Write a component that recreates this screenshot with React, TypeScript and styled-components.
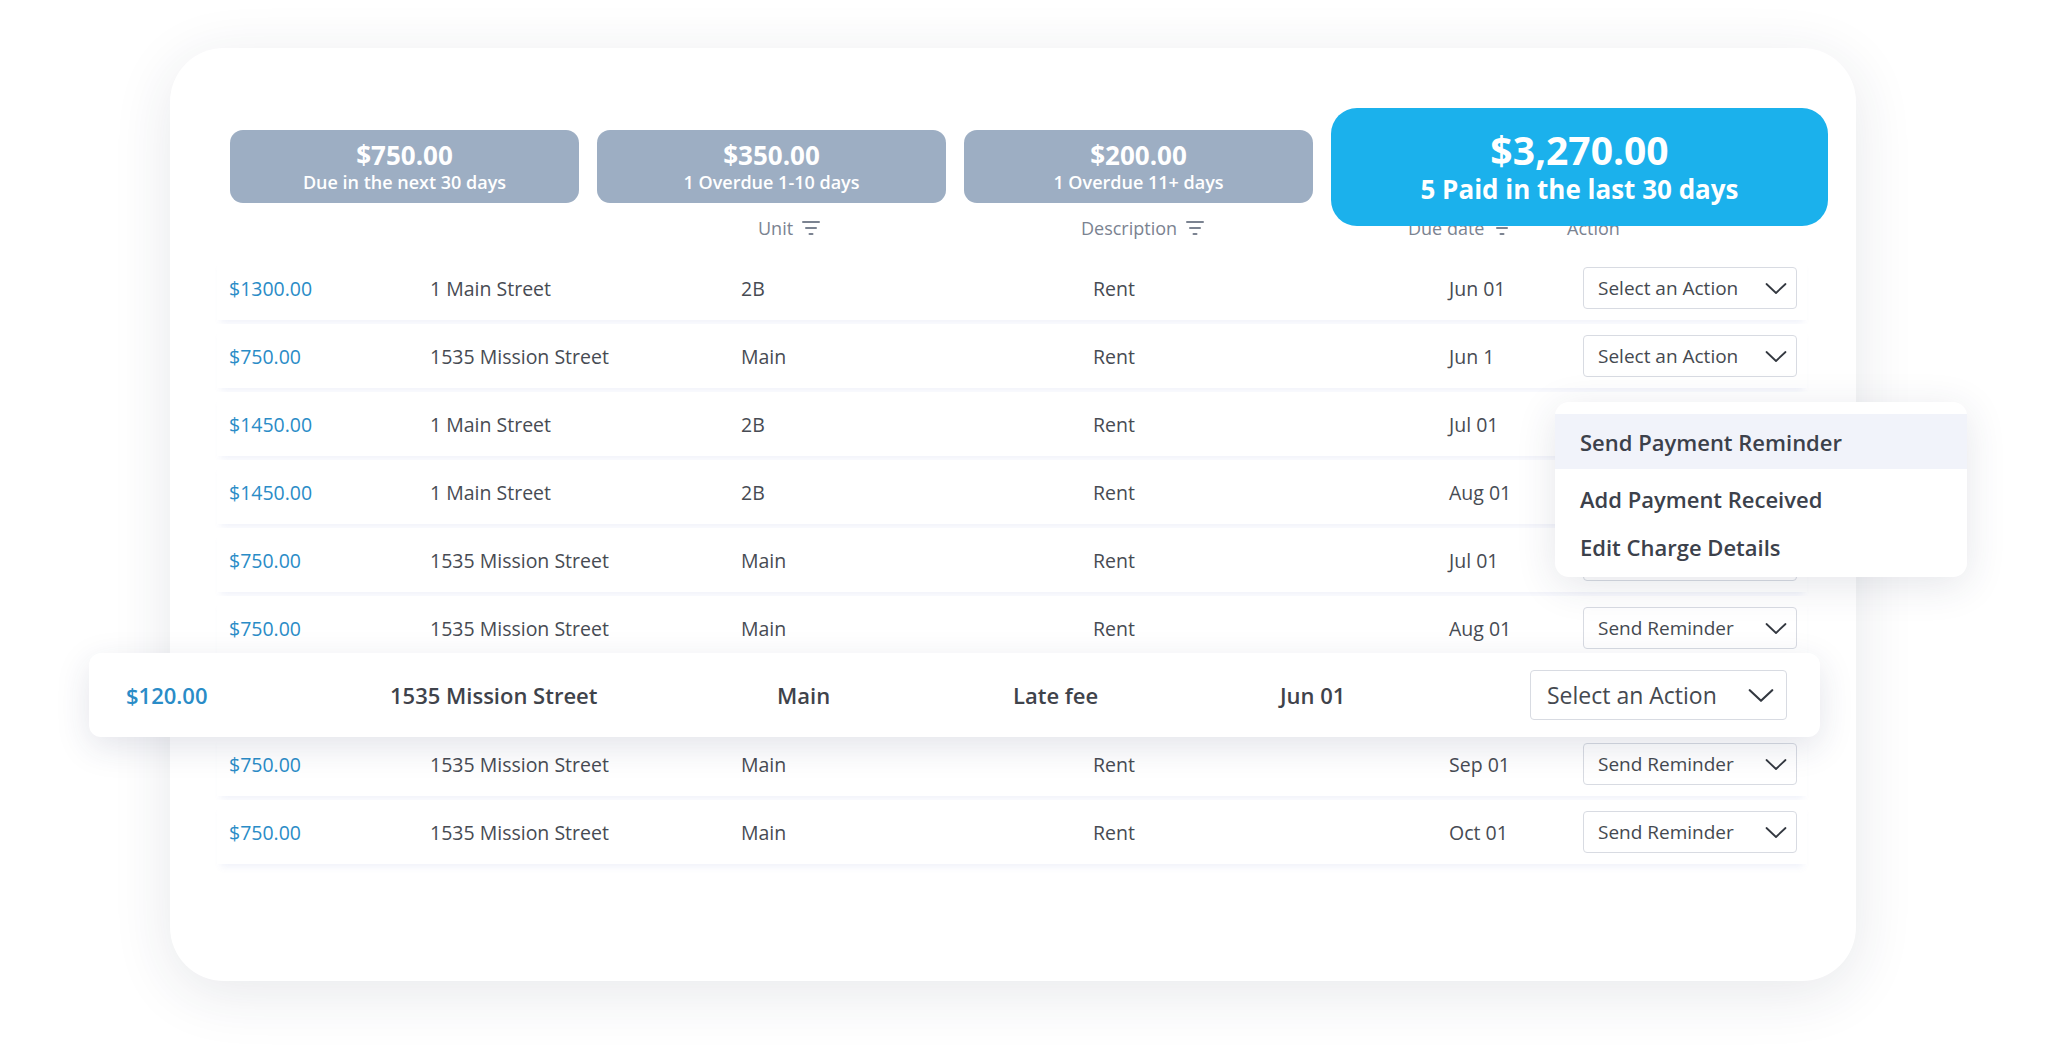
import styled, { createGlobalStyle } from 'styled-components';

interface Charge {
  amount: string;
  address: string;
  unit: string;
  description: string;
  due: string;
  action: string;
}

const charges: Charge[] = [
  { amount: '$1300.00', address: '1 Main Street', unit: '2B', description: 'Rent', due: 'Jun 01', action: 'Select an Action' },
  { amount: '$750.00', address: '1535 Mission Street', unit: 'Main', description: 'Rent', due: 'Jun 1', action: 'Select an Action' },
  { amount: '$1450.00', address: '1 Main Street', unit: '2B', description: 'Rent', due: 'Jul 01', action: 'Select an Action' },
  { amount: '$1450.00', address: '1 Main Street', unit: '2B', description: 'Rent', due: 'Aug 01', action: 'Send Reminder' },
  { amount: '$750.00', address: '1535 Mission Street', unit: 'Main', description: 'Rent', due: 'Jul 01', action: 'Send Reminder' },
  { amount: '$750.00', address: '1535 Mission Street', unit: 'Main', description: 'Rent', due: 'Aug 01', action: 'Send Reminder' },
];

const lateFee: Charge = {
  amount: '$120.00',
  address: '1535 Mission Street',
  unit: 'Main',
  description: 'Late fee',
  due: 'Jun 01',
  action: 'Select an Action',
};

const laterCharges: Charge[] = [
  { amount: '$750.00', address: '1535 Mission Street', unit: 'Main', description: 'Rent', due: 'Sep 01', action: 'Send Reminder' },
  { amount: '$750.00', address: '1535 Mission Street', unit: 'Main', description: 'Rent', due: 'Oct 01', action: 'Send Reminder' },
];

const menuItems = ['Send Payment Reminder', 'Add Payment Received', 'Edit Charge Details'];

const GlobalStyle = createGlobalStyle`
  html, body {
    margin: 0;
    padding: 0;
    background: #ffffff;
    font-family: "Open Sans", "Noto Sans", sans-serif;
    overflow: hidden;
  }
  * { box-sizing: border-box; }
`;

const Page = styled.div`
  width: 2048px;
  height: 1062px;
  padding: 48px 0 0 170px;
`;

const Card = styled.div`
  width: 1686px;
  height: 933px;
  background: #ffffff;
  border-radius: 54px;
  box-shadow: 0 12px 60px rgba(40, 50, 75, 0.11);
  padding: 82px 49px 0 47px;
  display: flex;
  flex-direction: column;
`;

const StatsRow = styled.div`
  display: flex;
  align-items: center;
  gap: 18px;
  margin-left: 13px;
  height: 73px;
`;

const StatCard = styled.div<{ $featured?: boolean }>`
  position: relative;
  z-index: 2;
  flex-shrink: 0;
  width: ${p => (p.$featured ? '497px' : '349px')};
  height: ${p => (p.$featured ? '118px' : '73px')};
  margin: ${p => (p.$featured ? '-22px 0' : '0')};
  border-radius: ${p => (p.$featured ? '26px' : '13px')};
  background: ${p => (p.$featured ? '#1bb1ec' : '#9daec3')};
  color: #ffffff;
  display: flex;
  flex-direction: column;
  align-items: center;
  justify-content: center;
  text-align: center;
`;

const StatAmount = styled.div<{ $featured?: boolean }>`
  font-size: ${p => (p.$featured ? '39px' : '26px')};
  line-height: ${p => (p.$featured ? '46px' : '31px')};
  font-weight: 700;
`;

const StatLabel = styled.div<{ $featured?: boolean }>`
  font-size: ${p => (p.$featured ? '26px' : '18px')};
  line-height: ${p => (p.$featured ? '33px' : '23px')};
  font-weight: ${p => (p.$featured ? 700 : 600)};
`;

const HeaderRow = styled.div`
  display: grid;
  grid-template-columns: 541px 323px 327px 159px 1fr;
  height: 40px;
  margin-top: 5px;
  align-items: center;
  color: #7b8391;
  font-size: 18px;
`;

const HeaderCell = styled.div`
  display: flex;
  align-items: center;
  gap: 9px;
`;

const Rows = styled.div`
  display: flex;
  flex-direction: column;
  gap: 4px;
  margin-top: 8px;
`;

const Row = styled.div`
  display: grid;
  grid-template-columns: 201px 311px 352px 356px 134px 214px;
  align-items: center;
  height: 64px;
  padding: 0 10px 0 12px;
  background: #ffffff;
  box-shadow: 0 7px 7px -4px rgba(90, 110, 200, 0.09);
  color: #474b53;
  font-size: 19.5px;
`;

const FeaturedRow = styled.div`
  position: relative;
  z-index: 1;
  display: grid;
  grid-template-columns: 264px 387px 236px 267px 250px 257px;
  align-items: center;
  height: 84px;
  margin: -11px -13px -9px -128px;
  padding: 0 33px 0 37px;
  background: #ffffff;
  border-radius: 12px;
  box-shadow: 0 10px 34px rgba(40, 50, 90, 0.13);
  color: #3f434b;
  font-size: 22px;
  font-weight: 600;
`;

const Amount = styled.div`
  color: #2a8cc7;
`;

const Cell = styled.div`
  white-space: nowrap;
`;

const ActionCell = styled.div`
  position: relative;
`;

const Select = styled.div<{ $large?: boolean }>`
  display: flex;
  align-items: center;
  justify-content: space-between;
  height: ${p => (p.$large ? '50px' : '42px')};
  padding: ${p => (p.$large ? '0 12px 0 16px' : '0 9px 0 14px')};
  border: 1px solid #d8dbe2;
  border-radius: 4px;
  background: #ffffff;
  color: #454950;
  font-size: ${p => (p.$large ? '23px' : '19px')};
  font-weight: 400;
`;

const Menu = styled.div`
  position: absolute;
  z-index: 5;
  top: -1px;
  left: -28px;
  width: 412px;
  padding: 12px 0 6px;
  background: #ffffff;
  border-radius: 14px;
  box-shadow: 0 8px 40px rgba(40, 50, 80, 0.12);
`;

const MenuItem = styled.div<{ $active?: boolean }>`
  display: flex;
  align-items: center;
  height: ${p => (p.$active ? '55px' : '48px')};
  margin-bottom: ${p => (p.$active ? '6px' : '0')};
  padding-left: 25px;
  background: ${p => (p.$active ? '#f1f3fa' : 'transparent')};
  color: #3c414b;
  font-size: 22px;
  font-weight: 600;
`;

const FilterIcon = () => (
  <svg width="18" height="16" viewBox="0 0 18 16" fill="none" stroke="#7b8391" strokeWidth="2" strokeLinecap="round">
    <line x1="1" y1="2" x2="17" y2="2" />
    <line x1="4" y1="8" x2="14" y2="8" />
    <line x1="7.5" y1="14" x2="10.5" y2="14" />
  </svg>
);

const Chevron = ({ size = 22 }: { size?: number }) => (
  <svg width={size} height={size / 2} viewBox="0 0 22 11" fill="none" stroke="#333840" strokeWidth="1.8" strokeLinecap="round" strokeLinejoin="round">
    <polyline points="1.5,1 11,10 20.5,1" />
  </svg>
);

const ChargeRow = ({ charge, menu }: { charge: Charge; menu?: boolean }) => (
  <Row>
    <Amount>{charge.amount}</Amount>
    <Cell>{charge.address}</Cell>
    <Cell>{charge.unit}</Cell>
    <Cell>{charge.description}</Cell>
    <Cell>{charge.due}</Cell>
    <ActionCell>
      <Select>
        {charge.action}
        <Chevron />
      </Select>
      {menu && (
        <Menu>
          {menuItems.map((item, i) => (
            <MenuItem key={item} $active={i === 0}>{item}</MenuItem>
          ))}
        </Menu>
      )}
    </ActionCell>
  </Row>
);

const App = () => (
  <Page>
    <GlobalStyle />
    <Card>
      <StatsRow>
        <StatCard>
          <StatAmount>$750.00</StatAmount>
          <StatLabel>Due in the next 30 days</StatLabel>
        </StatCard>
        <StatCard>
          <StatAmount>$350.00</StatAmount>
          <StatLabel>1 Overdue 1-10 days</StatLabel>
        </StatCard>
        <StatCard>
          <StatAmount>$200.00</StatAmount>
          <StatLabel>1 Overdue 11+ days</StatLabel>
        </StatCard>
        <StatCard $featured>
          <StatAmount $featured>$3,270.00</StatAmount>
          <StatLabel $featured>5 Paid in the last 30 days</StatLabel>
        </StatCard>
      </StatsRow>

      <HeaderRow>
        <div />
        <HeaderCell>Unit <FilterIcon /></HeaderCell>
        <HeaderCell>Description <FilterIcon /></HeaderCell>
        <HeaderCell>Due date <FilterIcon /></HeaderCell>
        <HeaderCell>Action</HeaderCell>
      </HeaderRow>

      <Rows>
        {charges.map((c, i) => (
          <ChargeRow key={i} charge={c} menu={i === 2} />
        ))}
        <FeaturedRow>
          <Amount>{lateFee.amount}</Amount>
          <Cell>{lateFee.address}</Cell>
          <Cell>{lateFee.unit}</Cell>
          <Cell>{lateFee.description}</Cell>
          <Cell>{lateFee.due}</Cell>
          <Select $large>
            {lateFee.action}
            <Chevron size={26} />
          </Select>
        </FeaturedRow>
        {laterCharges.map((c, i) => (
          <ChargeRow key={i} charge={c} />
        ))}
      </Rows>
    </Card>
  </Page>
);

export default App;
